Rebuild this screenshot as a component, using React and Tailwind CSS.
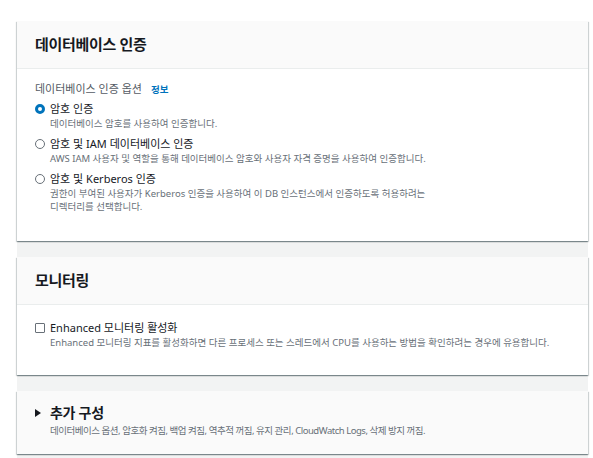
import React from 'react';

const font = { fontFamily: '"Noto Sans", "Noto Sans CJK KR", sans-serif' };

function Card({ children }) {
  return (
    <div className="bg-white shadow-[0_1px_1px_0_rgba(0,28,36,0.3),1px_1px_1px_0_rgba(0,28,36,0.15),-1px_1px_1px_0_rgba(0,28,36,0.15)]">
      {children}
    </div>
  );
}

function CardHeader({ title }) {
  return (
    <div className="h-[48px] bg-[#fafafa] border-b border-[#eaeded] px-[18px] flex items-center">
      <h2 className="text-[15px] font-bold text-[#16191f] tracking-[-0.02em]">{title}</h2>
    </div>
  );
}

function Radio({ checked }) {
  if (checked) {
    return <span className="mt-[3px] w-[10px] h-[10px] rounded-full border-[3px] border-[#0073bb] bg-white shrink-0" />;
  }
  return <span className="mt-[3px] w-[10px] h-[10px] rounded-full border border-[#687078] bg-white shrink-0" />;
}

function Option({ checked, label, desc }) {
  return (
    <div className="flex gap-[5px]">
      <Radio checked={checked} />
      <div>
        <div className="text-[11px] leading-[16px] text-[#16191f]">{label}</div>
        {desc.map((d) => (
          <div key={d} className="text-[9.5px] leading-[13px] text-[#687078]">{d}</div>
        ))}
      </div>
    </div>
  );
}

export default function App() {
  return (
    <div className="min-h-screen bg-white pl-[17px] pt-[21px]" style={font}>
      <div className="w-[571px] bg-[#f2f3f3] flex flex-col gap-[16px] pb-[6px]">
        {/* 데이터베이스 인증 */}
        <Card>
          <CardHeader title="데이터베이스 인증" />
          <div className="px-[18px] pt-[13px] pb-[28px]">
            <div className="text-[11px] leading-[14px] text-[#545b64]">
              데이터베이스 인증 옵션
              <span className="ml-[9px] text-[9.5px] font-bold text-[#0073bb]">정보</span>
            </div>
            <div className="mt-[4px] flex flex-col gap-[6px]">
              <Option checked label="암호 인증" desc={['데이터베이스 암호를 사용하여 인증합니다.']} />
              <Option
                label="암호 및 IAM 데이터베이스 인증"
                desc={['AWS IAM 사용자 및 역할을 통해 데이터베이스 암호와 사용자 자격 증명을 사용하여 인증합니다.']}
              />
              <Option
                label="암호 및 Kerberos 인증"
                desc={[
                  '권한이 부여된 사용자가 Kerberos 인증을 사용하여 이 DB 인스턴스에서 인증하도록 허용하려는',
                  '디렉터리를 선택합니다.',
                ]}
              />
            </div>
          </div>
        </Card>

        {/* 모니터링 */}
        <Card>
          <CardHeader title="모니터링" />
          <div className="px-[18px] pt-[15px] pb-[26px] flex gap-[5px]">
            <span className="mt-[3px] w-[10px] h-[10px] border border-[#687078] rounded-[1px] bg-white shrink-0" />
            <div>
              <div className="text-[11px] leading-[16px] text-[#16191f]">Enhanced 모니터링 활성화</div>
              <div className="text-[9.5px] leading-[13px] text-[#687078]">
                Enhanced 모니터링 지표를 활성화하면 다른 프로세스 또는 스레드에서 CPU를 사용하는 방법을 확인하려는 경우에 유용합니다.
              </div>
            </div>
          </div>
        </Card>

        {/* 추가 구성 */}
        <Card>
          <div className="px-[18px] pt-[12px] pb-[17px] bg-[#fafafa]">
            <div className="flex items-center gap-[9px]">
              <svg width="6" height="8" viewBox="0 0 6 8" className="shrink-0">
                <path d="M0 0 L6 4 L0 8 Z" fill="#16191f" />
              </svg>
              <h2 className="text-[14px] leading-[20px] font-bold text-[#16191f] tracking-[-0.02em]">추가 구성</h2>
            </div>
            <div className="mt-[1px] pl-[15px] text-[9.5px] leading-[13px] text-[#687078] tracking-[-0.05em]">
              데이터베이스 옵션, 암호화 켜짐, 백업 켜짐, 역추적 꺼짐, 유지 관리, CloudWatch Logs, 삭제 방지 꺼짐.
            </div>
          </div>
        </Card>
      </div>
    </div>
  );
}
